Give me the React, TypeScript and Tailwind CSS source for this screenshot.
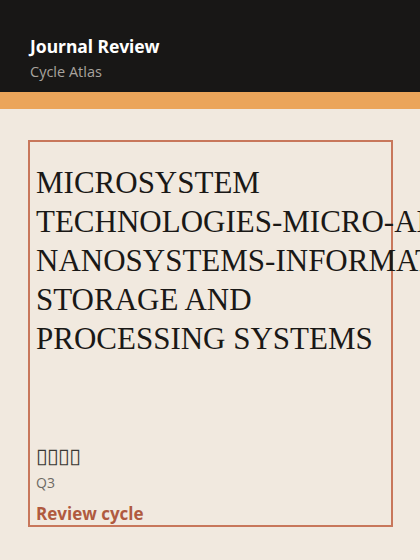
// Journal review card: dark header, accent strip and a bordered journal card
const journal = {
  titleLines: ['MICROSYSTEM', 'TECHNOLOGIES-MICRO-AND', 'NANOSYSTEMS-INFORMATION', 'STORAGE AND', 'PROCESSING SYSTEMS'],
  native: '\u25AF\u25AF\u25AF\u25AF',
  quartile: 'Q3',
}

export default function App() {
  return (
    <div className="min-h-[560px] w-[420px] overflow-hidden bg-[#f1e9df] font-['Noto_Sans',sans-serif]">
      {/* Header */}
      <header className="h-[92px] bg-[#181716] px-[30px] pt-[34px]">
        <h1 className="text-[17.5px] font-bold leading-[24px] text-white">Journal Review</h1>
        <p className="mt-[4px] text-[14.5px] leading-[20px] text-[#a8a49e] font-['Open_Sans',sans-serif]">Cycle Atlas</p>
      </header>
      <div className="h-[17px] bg-[#eba55a]" />

      {/* Journal card */}
      <div className="px-[28px] pt-[31px]">
        <div className="flex h-[387px] w-[365px] flex-col border-2 border-[#c8775b] px-[6px] pt-[21px]">
          <h2 className="text-[31px] leading-[39px] text-[#1a1816] font-['Liberation_Serif',serif]">
            {journal.titleLines.map(line => (
              <span key={line} className="block whitespace-nowrap">{line}</span>
            ))}
          </h2>
          <div className="mt-auto font-['Open_Sans',sans-serif]">
            <p className="text-[21px] font-bold leading-[22px] tracking-[-0.5px] text-[#3a3833] font-['DejaVu_Sans',sans-serif]">{journal.native}</p>
            <p className="mt-[6px] text-[14px] leading-[20px] text-[#6e6a63]">{journal.quartile}</p>
            <p className="mt-[10px] text-[17px] font-bold leading-[22px] text-[#b05a40]">Review cycle</p>
          </div>
        </div>
      </div>
    </div>
  )
}
